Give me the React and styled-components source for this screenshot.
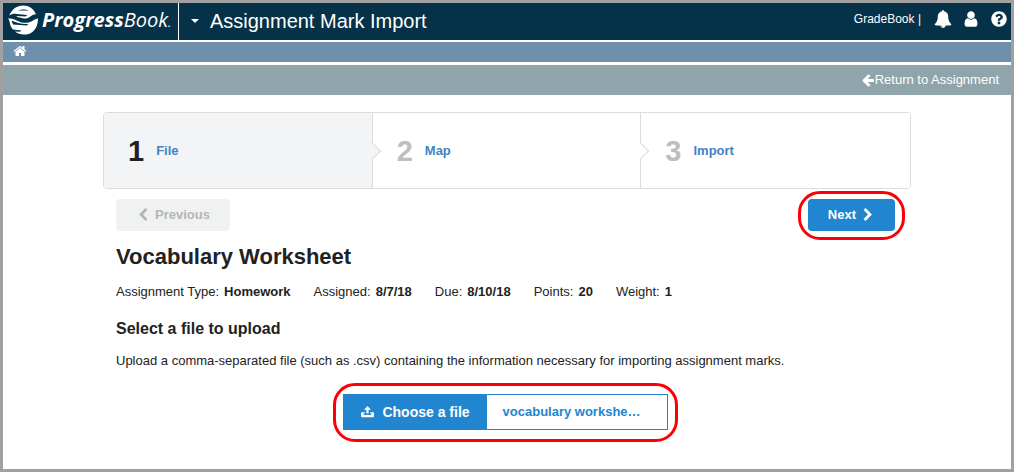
import React from "react";
import styled, { createGlobalStyle } from "styled-components";
import { FaQuestionCircle } from "react-icons/fa";

const steps = [
  { number: 1, label: "File", active: true },
  { number: 2, label: "Map" },
  { number: 3, label: "Import" },
];

const details = [
  { label: "Assignment Type:", value: "Homework" },
  { label: "Assigned:", value: "8/7/18" },
  { label: "Due:", value: "8/10/18" },
  { label: "Points:", value: "20" },
  { label: "Weight:", value: "1" },
];

const iconPaths = {
  home: "M1472 992v480q0 26-19 45t-45 19h-384v-384h-256v384h-384q-26 0-45-19t-19-45v-480q0-1 .5-3t.5-3l575-474 575 474q1 2 1 6zm223-69l-62 74q-8 9-21 11h-3q-13 0-21-7l-692-577-692 577q-12 8-24 7-13-2-21-11l-62-74q-8-10-7-23.5t11-21.5l719-599q32-26 76-26t76 26l244 204v-195q0-14 9-23t23-9h192q14 0 23 9t9 23v408l219 182q10 8 11 21.5t-7 23.5z",
  user: "M1536 1399q0 109-62.5 187t-150.5 78h-854q-88 0-150.5-78t-62.5-187q0-85 8.5-160.5t31.5-152 58.5-131 94-89 134.5-34.5q131 128 313 128t313-128q76 0 134.5 34.5t94 89 58.5 131 31.5 152 8.5 160.5zm-256-887q0 159-112.5 271.5t-271.5 112.5-271.5-112.5-112.5-271.5 112.5-271.5 271.5-112.5 271.5 112.5 112.5 271.5z",
  bell: "M912 1696q0-16-16-16-59 0-101.5-42.5t-42.5-101.5q0-16-16-16t-16 16q0 73 51.5 124.5t124.5 51.5q16 0 16-16zm816-288q0 52-38 90t-90 38h-448q0 106-75 181t-181 75-181-75-75-181h-448q-52 0-90-38t-38-90q50-42 91-88t85-119.5 74.5-158.5 50-206 19.5-260q0-152 117-282.5t307-158.5q-8-19-8-39 0-40 28-68t68-28 68 28 28 68q0 20-8 39 190 28 307 158.5t117 282.5q0 139 19.5 260t50 206 74.5 158.5 85 119.5 91 88z",
  arrowLeft:
    "M1664 896v128q0 53-32.5 90.5t-84.5 37.5h-704l293 294q38 36 38 90t-38 90l-75 76q-37 37-90 37-52 0-91-37l-651-652q-37-37-37-90 0-52 37-91l651-650q38-38 91-38 52 0 90 38l75 74q38 38 38 91t-38 91l-293 293h704q52 0 84.5 37.5t32.5 90.5z",
  chevronLeft:
    "M1427 301l-531 531 531 531q19 19 19 45t-19 45l-166 166q-19 19-45 19t-45-19l-742-742q-19-19-19-45t19-45l742-742q19-19 45-19t45 19l166 166q19 19 19 45t-19 45z",
  chevronRight:
    "M1363 877l-742 742q-19 19-45 19t-45-19l-166-166q-19-19-19-45t19-45l531-531-531-531q-19-19-19-45t19-45l166-166q19-19 45-19t45 19l742 742q19 19 19 45t-19 45z",
};

const Icon = ({ name, size }) => (
  <svg width={size} height={size} viewBox="0 0 1792 1792" fill="currentColor">
    <path d={iconPaths[name]} />
  </svg>
);

const UploadIcon = () => (
  <svg width="13" height="12" viewBox="0 0 13 12" fill="currentColor">
    <path d="M6.5 0L10 3.7H7.6V7.6H5.4V3.7H3z" />
    <path d="M0 7.2Q0 6.3 1 6.3H4V7.3H2.3L3.3 9H9.7L10.7 7.3H9V6.3H12Q13 6.3 13 7.2V10Q13 11.2 11.8 11.2H1.2Q0 11.2 0 10z" />
  </svg>
);

const LogoMark = () => (
  <svg width="31" height="31" viewBox="0 0 31 31" fill="#fff">
    <path d="M1.2 10.5C4 4.2 9 0.6 15 0.6C21 0.6 25.6 3.8 28 9.2C25.4 9.4 23.8 10.4 21.6 12C19.6 13.4 17.4 13.8 14.8 13.2L9.4 12L8.4 10.9L17.6 11.5L19.4 9.9L8.6 8.9C5.6 8.6 3.2 9.2 1.2 10.5z" />
    <path d="M10.4 6C13 4.2 17.5 4 20.8 6C17.6 5.5 13.6 5.4 10.4 6z" fill="#053248" />
    <path d="M0 13.6C3 13 5.2 13.8 8 15.2C12.4 17.4 17 18.6 21.4 17.2C25 16 27 13.8 30 13.4C30 19 28.4 23.6 25 26.4C20 30.6 12 30.6 6.8 26.6L12 26.8L13.6 25.4L5 24.6C3.2 22.6 2.2 20.4 1.8 18C1.5 16.2 1 14.6 0 13.6zM3.4 15.6L5 19.4L18.6 20.6L20.4 19C13.6 19.4 8 17.6 3.4 15.6z" />
  </svg>
);

const App = () => {
  return (
    <StyledPage>
      <GlobalStyle />
      <StyledHeader>
        <StyledLogo href="#">
          <LogoMark />
          <StyledWordmark>
            <b>Progress</b>Book<small>.</small>
          </StyledWordmark>
        </StyledLogo>
        <StyledMenuButton type="button">
          <StyledCaret />
          Assignment Mark Import
        </StyledMenuButton>
        <StyledTools>
          <span>GradeBook |</span>
          <StyledIconButton type="button" aria-label="Notifications">
            <Icon name="bell" size={18} />
          </StyledIconButton>
          <StyledIconButton type="button" aria-label="Account">
            <Icon name="user" size={18} />
          </StyledIconButton>
          <StyledIconButton type="button" aria-label="Help">
            <FaQuestionCircle size={16} />
          </StyledIconButton>
        </StyledTools>
      </StyledHeader>

      <StyledNav>
        <a href="#" aria-label="Home">
          <Icon name="home" size={14} />
        </a>
      </StyledNav>

      <StyledReturnBar>
        <a href="#">
          <Icon name="arrowLeft" size={14} />
          Return to Assignment
        </a>
      </StyledReturnBar>

      <StyledMain>
        <StyledSteps>
          {steps.map((step) => (
            <StyledStep key={step.number} $active={step.active}>
              <strong>{step.number}</strong>
              <a href="#">{step.label}</a>
            </StyledStep>
          ))}
        </StyledSteps>

        <StyledContent>
          <StyledActions>
            <StyledButton type="button" disabled>
              <Icon name="chevronLeft" size={14} />
              Previous
            </StyledButton>
            <StyledHighlight>
              <StyledButton type="button">
                Next
                <Icon name="chevronRight" size={14} />
              </StyledButton>
            </StyledHighlight>
          </StyledActions>

          <StyledTitle>Vocabulary Worksheet</StyledTitle>
          <StyledDetails>
            {details.map((item) => (
              <div key={item.label}>
                <dt>{item.label}</dt>
                <dd>{item.value}</dd>
              </div>
            ))}
          </StyledDetails>

          <StyledSubtitle>Select a file to upload</StyledSubtitle>
          <StyledText>
            Upload a comma-separated file (such as .csv) containing the
            information necessary for importing assignment marks.
          </StyledText>

          <StyledUpload>
            <StyledHighlight $tall>
              <StyledFilePicker>
                <input type="file" accept=".csv" />
                <StyledChoose>
                  <UploadIcon />
                  Choose a file
                </StyledChoose>
                <StyledFileName>vocabulary workshe…</StyledFileName>
              </StyledFilePicker>
            </StyledHighlight>
          </StyledUpload>
        </StyledContent>
      </StyledMain>
    </StyledPage>
  );
};

const GlobalStyle = createGlobalStyle`
  * {
    box-sizing: border-box;
  }

  body {
    margin: 0;
    font-family: "Liberation Sans", Arial, sans-serif;
    font-size: 13px;
    line-height: 16px;
    color: #222;
    background: #fff;
  }

  a {
    color: inherit;
    text-decoration: none;
  }

  button {
    font: inherit;
    color: inherit;
    border: 0;
    padding: 0;
    background: none;
    cursor: pointer;
  }
`;

const StyledPage = styled.div`
  min-height: 100vh;
  border: 3px solid #a0a0a0;
`;

const StyledHeader = styled.header`
  display: flex;
  align-items: stretch;
  height: 37px;
  color: #fff;
  background: #053248;
`;

const StyledLogo = styled.a`
  display: flex;
  align-items: center;
  gap: 3px;
  padding: 0 7px 3px 5px;
  border-right: 1px solid #fff;
`;

const StyledWordmark = styled.span`
  padding-top: 3px;
  font-family: "Open Sans", sans-serif;
  font-size: 20px;
  line-height: 30px;
  font-style: italic;

  small {
    font-size: 12px;
  }
`;

const StyledMenuButton = styled.button`
  display: flex;
  align-items: center;
  gap: 11px;
  padding: 0 0 2px 12px;
  font-size: 20px;
`;

const StyledCaret = styled.span`
  border: 4px solid transparent;
  border-top-color: #fff;
  border-bottom: 0;
`;

const StyledTools = styled.div`
  display: flex;
  align-items: center;
  margin-left: auto;
  padding: 0 2px 6px 0;
  font-size: 12px;

  span {
    margin-right: 12px;
  }
`;

const StyledIconButton = styled.button`
  display: flex;
  justify-content: center;
  width: 20px;
  margin-left: 8px;

  &:first-of-type {
    margin-left: 0;
  }
`;

const StyledNav = styled.nav`
  display: flex;
  align-items: center;
  height: 20px;
  margin: 2px 0 3px;
  padding: 0 0 2px 10px;
  color: #fff;
  background: #6e90ad;

  a {
    display: flex;
  }
`;

const StyledReturnBar = styled.div`
  display: flex;
  align-items: center;
  justify-content: flex-end;
  height: 30px;
  padding-right: 12px;
  color: #fff;
  background: #90a4ab;

  a {
    display: flex;
    align-items: center;
  }
`;

const StyledMain = styled.main`
  padding: 17px 100px 28px;
`;

const StyledSteps = styled.ol`
  display: grid;
  grid-template-columns: repeat(3, 1fr);
  margin: 0;
  padding: 0;
  list-style: none;
  border: 1px solid #dcdcdd;
  border-radius: 4px;
`;

const StyledStep = styled.li`
  position: relative;
  display: flex;
  align-items: center;
  gap: 12px;
  height: 75px;
  padding-left: 24px;
  background: ${({ $active }) => ($active ? "#f3f4f5" : "#fff")};
  border-radius: ${({ $active }) => ($active ? "3px 0 0 3px" : "0 3px 3px 0")};

  strong {
    font-size: 29px;
    line-height: 32px;
    color: ${({ $active }) => ($active ? "#222" : "#bebebe")};
  }

  a {
    font-weight: bold;
    color: #4183c4;
  }

  &:not(:last-child) {
    border-right: 1px solid #dcdcdd;
    border-radius: ${({ $active }) => ($active ? "3px 0 0 3px" : "0")};
  }

  /* arrow on the divider */
  &:not(:last-child)::after {
    content: "";
    position: absolute;
    top: 50%;
    right: 0;
    z-index: 1;
    width: 12px;
    height: 12px;
    border: 1px solid #dcdcdd;
    border-width: 1px 1px 0 0;
    background: inherit;
    transform: translate(50%, -50%) rotate(45deg);
  }
`;

const StyledContent = styled.div`
  padding: 10px 16px 0 13px;
`;

const StyledActions = styled.div`
  display: flex;
  justify-content: space-between;
`;

const StyledButton = styled.button`
  display: flex;
  align-items: center;
  gap: 5px;
  height: 32px;
  padding: 0 20px;
  font-weight: bold;
  color: #fff;
  background: #2185d0;
  border-radius: 4px;

  &:disabled {
    color: #b5b6b6;
    background: #f0f2f1;
    cursor: default;
  }
`;

const StyledHighlight = styled.div`
  position: relative;

  &::after {
    content: "";
    position: absolute;
    inset: ${({ $tall }) => ($tall ? "-11px -10px -12px" : "-8px -10px -9px")};
    border: 3px solid #fb0007;
    border-radius: 22px;
    pointer-events: none;
  }
`;

const StyledTitle = styled.h1`
  margin: 12px 0 0;
  font-size: 22px;
  line-height: 28px;
`;

const StyledDetails = styled.dl`
  display: flex;
  flex-wrap: wrap;
  gap: 23px;
  margin: 13px 0 0;

  div {
    display: flex;
    gap: 5px;
  }

  dd {
    margin: 0;
    font-weight: bold;
  }
`;

const StyledSubtitle = styled.h2`
  margin: 19px 0 0;
  font-size: 16px;
  line-height: 20px;
`;

const StyledText = styled.p`
  margin: 14px 0 0;
`;

const StyledUpload = styled.div`
  display: flex;
  justify-content: center;
  margin-top: 25px;
`;

const StyledFilePicker = styled.label`
  display: flex;
  height: 36px;
  font-weight: bold;
  color: #2185d0;
  border: 1px solid #2185d0;
  cursor: pointer;

  input {
    position: absolute;
    inset: 0;
    width: 100%;
    opacity: 0;
  }
`;

const StyledChoose = styled.span`
  display: flex;
  align-items: center;
  gap: 8px;
  padding: 0 17px;
  font-size: 14px;
  font-weight: 900;
  color: #fff;
  background: #2185d0;
`;

const StyledFileName = styled.span`
  display: flex;
  align-items: center;
  width: 180px;
  padding-left: 16px;
`;

export default App;
